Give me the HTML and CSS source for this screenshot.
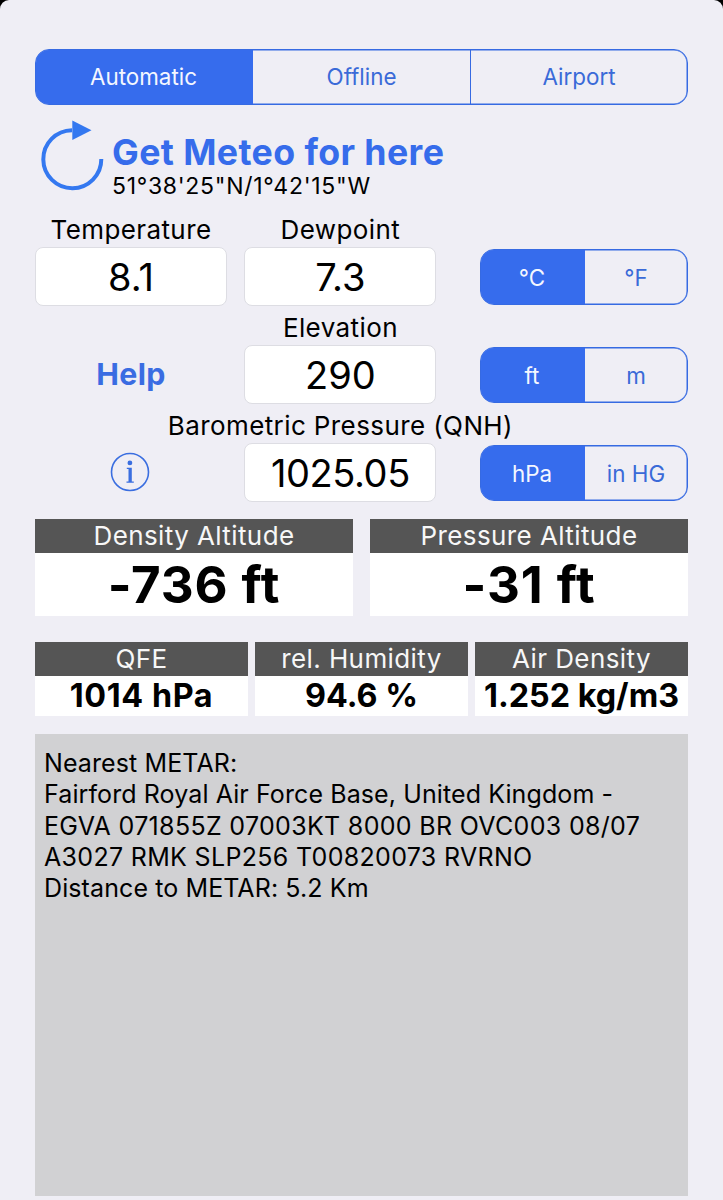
FILE: index.html
```html
<!DOCTYPE html>
<html lang="en">
<head>
<meta charset="utf-8">
<title>Density Altitude</title>
<link rel="stylesheet" href="styles.css">
</head>
<body>
<main class="app">
  <div class="segmented modes">
    <button class="segment active">Automatic</button>
    <button class="segment">Offline</button>
    <button class="segment">Airport</button>
  </div>

  <section class="meteo">
    <svg class="refresh" viewBox="0 0 66 74" width="66" height="74">
      <path d="M34 12.2A29 29 0 1 0 63.3 41" fill="none" stroke="#3478f0" stroke-width="4"/>
      <path d="M34.3 2.5V22L53.5 12.3Z" fill="#3478f0"/>
    </svg>
    <div class="meteo-text">
      <h1 class="meteo-title">Get Meteo for here</h1>
      <p class="coords">51°38'25"N/1°42'15"W</p>
    </div>
  </section>

  <section class="inputs">
    <div class="label">Temperature</div>
    <div class="label">Dewpoint</div>
    <div></div>
    <div class="field">8.1</div>
    <div class="field">7.3</div>
    <div class="segmented unit">
      <button class="segment active">°C</button>
      <button class="segment">°F</button>
    </div>

    <div></div>
    <div class="label">Elevation</div>
    <div></div>
    <a class="help">Help</a>
    <div class="field">290</div>
    <div class="segmented unit">
      <button class="segment active">ft</button>
      <button class="segment">m</button>
    </div>

    <div></div>
    <div class="label">Barometric Pressure (QNH)</div>
    <div></div>
    <div class="info">
      <svg viewBox="0 0 40 40" width="40" height="40">
        <circle cx="20" cy="20" r="18.5" fill="none" stroke="#3a6ee0" stroke-width="1.6"/>
        <circle cx="19.9" cy="10.9" r="2.4" fill="#3a6ee0"/>
        <path d="M16.8 15.8H21.8V29.5H23.8V30.8H16.5V29.5H18.5V17.1H16.8Z" fill="#3a6ee0"/>
      </svg>
    </div>
    <div class="field long">1025.05</div>
    <div class="segmented unit">
      <button class="segment active">hPa</button>
      <button class="segment">in HG</button>
    </div>
  </section>

  <section class="results large">
    <div class="card"><h2 class="card-head">Density Altitude</h2><p class="card-value">-736 ft</p></div>
    <div class="card"><h2 class="card-head">Pressure Altitude</h2><p class="card-value">-31 ft</p></div>
  </section>

  <section class="results small">
    <div class="card"><h2 class="card-head">QFE</h2><p class="card-value spaced">1014 hPa</p></div>
    <div class="card"><h2 class="card-head">rel. Humidity</h2><p class="card-value">94.6 %</p></div>
    <div class="card"><h2 class="card-head">Air Density</h2><p class="card-value">1.252 kg/m3</p></div>
  </section>

  <section class="metar">
    <p>Nearest METAR:</p>
    <p>Fairford Royal Air Force Base, United Kingdom -</p>
    <p class="report">EGVA 071855Z 07003KT 8000 BR OVC003 08/07</p>
    <p class="report">A3027 RMK SLP256 T00820073 RVRNO</p>
    <p>Distance to METAR: 5.2 Km</p>
  </section>
</main>
</body>
</html>
```
FILE: styles.css
```css
* { box-sizing: border-box; margin: 0; padding: 0; }
body { background: #000; font-family: Inter, "Liberation Sans", sans-serif; color: #000; }
.app {
  height: 1200px; padding: 49px 35px 4px; background: #efeef5;
  border-radius: 9px 9px 0 0; display: flex; flex-direction: column; overflow: hidden;
}

.segmented { display: grid; border: 2px solid #366ae2; border-radius: 14px; overflow: hidden; }
.segment {
  border: 0; background: transparent; color: #3a6ad8; font: 400 22.4px Inter, sans-serif;
  display: flex; align-items: center; justify-content: center; white-space: nowrap;
}
.segment.active { background: #366ced; color: #f4f7ff; padding-right: 2px; }
.segmented { border-width: 1px; box-shadow: inset 0 0 0 0.5px #366ae2; }
.modes { height: 55.5px; flex: none; grid-template-columns: 217px 217px 1fr; }
.modes .segment:last-child { border-left: 1px solid #366ae2; }
.unit { height: 56px; margin-top: 2px; grid-template-columns: 104px 1fr; }

.meteo { height: 108.5px; flex: none; display: flex; padding-top: 13.5px; padding-left: 3px; }
.refresh { flex: none; }
.meteo-text { padding: 12.5px 0 0 8px; white-space: nowrap; }
.meteo-title { font-size: 35.7px; line-height: 42px; font-weight: 700; color: #366ceb; letter-spacing: 0.4px; }
.coords { font-size: 23px; line-height: 26.5px; letter-spacing: 0.7px; }

.inputs {
  display: grid; flex: none; height: 288px;
  grid-template-columns: 209.4px 235.6px 208px;
  grid-template-rows: 34px 58px 40px 58px 40px 58px;
}
.label, .field { width: 192px; }
.label {
  display: flex; justify-content: center; align-items: flex-end; white-space: nowrap;
  font-size: 26px; line-height: 34px; letter-spacing: 0.4px;
}
.field {
  height: 59px; background: #fff; border: 1px solid #dddde3; border-radius: 8px;
  display: flex; align-items: center; justify-content: center; font-size: 38px;
}
.field.long { letter-spacing: -0.4px; }
.help { width: 192px; text-align: center; font-size: 30.3px; line-height: 58px; font-weight: 700; color: #3a6ce2; letter-spacing: 0.4px; }
.info { width: 190.6px; display: flex; align-items: center; justify-content: center; }

.results { display: grid; flex: none; text-align: center; white-space: nowrap; }
.card { background: #fff; }
.card-head { background: #555; color: #f7f7f7; font-size: 26px; font-weight: 400; height: 34px; line-height: 34px; letter-spacing: 0.4px; }
.large { grid-template-columns: 318px 318px; justify-content: space-between; height: 96.5px; margin-top: 18px; }
.large .card-head { height: 33.6px; }
.large .card-value { font-size: 51px; line-height: 63px; font-weight: 700; letter-spacing: 0.9px; }
.small { grid-template-columns: repeat(3, 213px); justify-content: space-between; height: 74px; margin-top: 26.5px; }
.small .card-value { font-size: 32.3px; line-height: 40px; font-weight: 700; }
.small .spaced { letter-spacing: 0.6px; }

.metar {
  flex: 1; margin-top: 18px; padding: 14px 9px; background: #d1d1d3;
  font-size: 25px; line-height: 31.25px; letter-spacing: 0.1px; white-space: nowrap;
}
.report { letter-spacing: 0.32px; }
```
